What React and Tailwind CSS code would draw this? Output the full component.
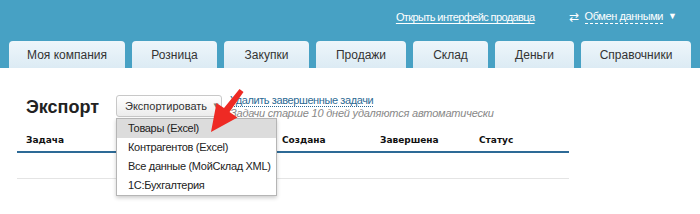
import { useState } from "react";

const tabs = [
  { name: "Моя компания", w: "w-[116px]" },
  { name: "Розница", w: "w-[85px]" },
  { name: "Закупки", w: "w-[85px]" },
  { name: "Продажи", w: "w-[90px]" },
  { name: "Склад", w: "w-[75px]" },
  { name: "Деньги", w: "w-[79px]" },
  { name: "Справочники", w: "w-[110px]" },
];

const menuItems = [
  "Товары (Excel)",
  "Контрагентов (Excel)",
  "Все данные (МойСклад XML)",
  "1С:Бухгалтерия",
];

function App() {
  const [active] = useState(0);

  return (
    <div className="relative w-[700px] h-[214px] bg-white overflow-hidden font-['Liberation_Sans',Arial,sans-serif]">
      {/* header */}
      <div className="h-[68px] bg-[#47a1c4] flex flex-col">
        <div className="h-[41px] flex items-start justify-end pt-[9px] pr-[23px] text-white text-[11px]">
          <a className="underline underline-offset-2 tracking-[-0.6px]">Открыть интерфейс продавца</a>
          <div className="ml-[34px] flex items-center">
            <span className="text-[12px] leading-none mr-[6px]">⇄</span>
            <span className="border-b border-dashed border-white leading-[14px] tracking-[-0.4px]">Обмен данными</span>
            <span className="ml-[5px] text-[9px]">▼</span>
          </div>
        </div>
        <div className="flex items-end gap-[7px] pl-[9px] h-[27px]">
          {tabs.map((t) => (
            <div
              key={t.name}
              className={`${t.w} h-[27px] rounded-t-[4px] bg-gradient-to-b from-[#eef6fb] to-[#dcebf4] flex items-center justify-center text-[12px] text-[#333]`}
            >
              {t.name}
            </div>
          ))}
        </div>
      </div>

      {/* content */}
      <div className="pl-[17px] w-[569px]">
        <div className="flex items-start pt-[27px] h-[63px]">
          <h1 className="ml-[9px] mt-[1px] text-[18px] font-bold text-[#222] leading-[22px] w-[90px]">Экспорт</h1>
          <button className="h-[22px] w-[106px] border border-[#c8c8c8] rounded-[3px] bg-gradient-to-b from-white to-[#ececec] flex items-center pl-[8px] text-[11px] text-[#333] whitespace-nowrap">
            Экспортировать
            <span className="ml-[5px] text-[8px] text-[#777]">▼</span>
          </button>
          <div className="ml-[8px] -mt-[1px] flex flex-col text-[11px] leading-[12px] whitespace-nowrap">
            <a className="text-[#2c6a94] border-b border-dotted border-[#2c6a94] self-start leading-[12px] tracking-[-0.4px]">Удалить завершенные задачи</a>
            <span className="italic text-[#888] tracking-[-0.2px]">Задачи старше 10 дней удаляются автоматически</span>
          </div>
        </div>
        <div className="flex items-center h-[20px] text-[9px] font-bold text-[#111] font-['DejaVu_Sans',Verdana,sans-serif]">
          <span className="ml-[9px] w-[256px]">Задача</span>
          <span className="w-[98px]">Создана</span>
          <span className="w-[99px]">Завершена</span>
          <span>Статус</span>
        </div>
        <div className="h-[2px] bg-[#2d6a96]" />
        <div className="h-[25px]" />
        <div className="h-[1px] bg-[#e4e4e4]" />
      </div>

      {/* dropdown menu */}
      <div className="absolute left-[116px] top-[118px] w-[161px] bg-white border border-[#b5b5b5] shadow-[0_2px_4px_rgba(0,0,0,0.2)] text-[11px] text-[#222] whitespace-nowrap tracking-[-0.3px]">
        {menuItems.map((m, i) => (
          <div
            key={m}
            className={`h-[19px] flex items-center pl-[11px] ${i === active ? "bg-[#dcdcdc]" : ""}`}
          >
            {m}
          </div>
        ))}
      </div>

      {/* red arrow */}
      <svg className="absolute left-0 top-0" width="700" height="214" viewBox="0 0 700 214">
        <polygon
          points="211,132 216.5,103 224,108 239.5,89 243.5,92 229.5,112 237.5,117.5"
          fill="#ee2a24"
        />
      </svg>
    </div>
  );
}

export default App;
